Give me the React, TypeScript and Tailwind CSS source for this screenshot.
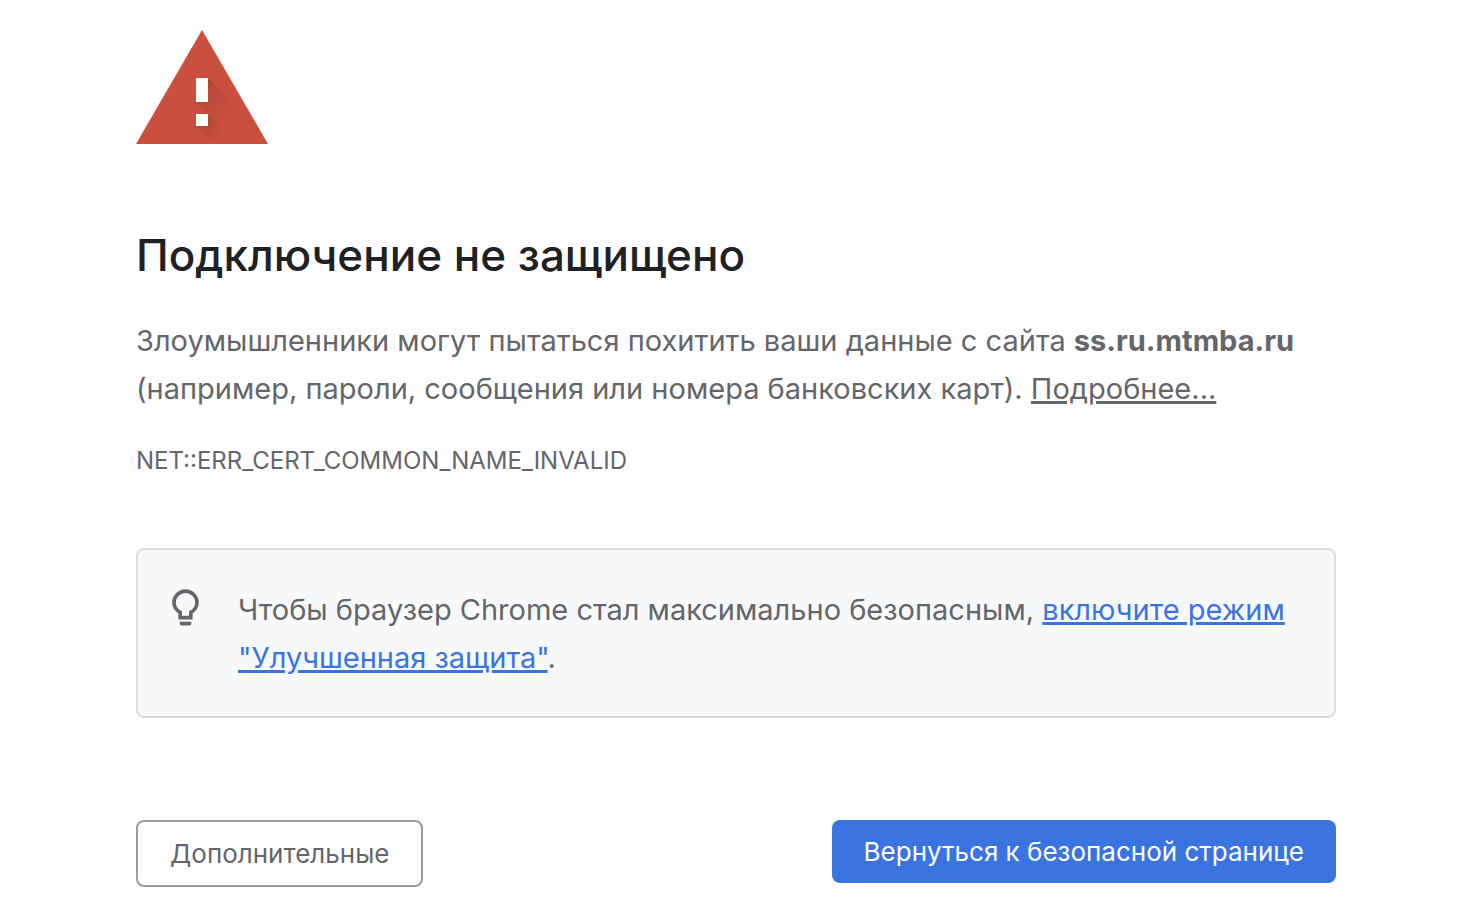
function WarningIcon() {
  return (
    <svg
      className="h-[114px] w-[132px]"
      viewBox="0 0 132 114"
      role="img"
      aria-label="Предупреждение"
    >
      <defs>
        <linearGradient
          id="mark-shadow"
          gradientUnits="userSpaceOnUse"
          x1="66"
          y1="54"
          x2="96"
          y2="84"
        >
          <stop offset="0" stopColor="#7d2d22" stopOpacity="0.28" />
          <stop offset="1" stopColor="#7d2d22" stopOpacity="0" />
        </linearGradient>
        <linearGradient
          id="dot-shadow"
          gradientUnits="userSpaceOnUse"
          x1="66"
          y1="90"
          x2="84"
          y2="108"
        >
          <stop offset="0" stopColor="#7d2d22" stopOpacity="0.28" />
          <stop offset="1" stopColor="#7d2d22" stopOpacity="0" />
        </linearGradient>
      </defs>
      <path d="M66 0 132 114H0z" fill="#ca4f3f" />
      <path d="M72 48 102 78 132 114H102L60 72z" fill="url(#mark-shadow)" />
      <path d="M72 84 102 114H78L60 96z" fill="url(#dot-shadow)" />
      <path d="M60 48h12v24H60zM60 84h12v12H60z" fill="#fff" />
    </svg>
  );
}

function BulbIcon() {
  return (
    <svg
      className="size-12 shrink-0"
      viewBox="0 0 48 48"
      fill="none"
      stroke="#646669"
      strokeWidth="3.6"
      aria-hidden="true"
    >
      <path d="M18.2 31.600v-5.200c-3.700-2-6.200-5.500-6.200-9.800a11.500 11.500 0 0 1 23 0c0 4.300-2.500 7.800-6.200 9.800v5.200z" />
      <path
        d="M17.700 35.800h11.600v1.600a2 2 0 0 1-2 2h-7.600a2 2 0 0 1-2-2z"
        fill="#646669"
        stroke="none"
      />
    </svg>
  );
}

export default function App() {
  return (
    <main className="bg-white pt-[30px] pr-[132px] pb-[29px] pl-[136px] font-['Inter',sans-serif] text-[29px] leading-[48px] text-[#646669]">
      <WarningIcon />

      <h1 className="mt-[82px] text-[44px] leading-[58px] font-medium text-[#202124]">
        Подключение не защищено
      </h1>

      <p className="mt-[33px]">
        Злоумышленники могут пытаться похитить ваши данные с сайта{" "}
        <strong className="font-bold">ss.ru.mtmba.ru</strong> (например,
        пароли, сообщения или номера банковских карт).{" "}
        <a href="#" className="underline decoration-3">
          Подробнее...
        </a>
      </p>

      <p className="mt-6 text-2xl leading-[48px]">
        NET::ERR_CERT_COMMON_NAME_INVALID
      </p>

      <section className="mt-[63px] flex gap-7 rounded-lg border-2 border-[#dadce0] bg-[#f8f9fb] px-6 pt-9 pb-[34px]">
        <BulbIcon />
        <p>
          Чтобы браузер Chrome стал максимально безопасным,{" "}
          <a href="#" className="text-[#3974e0] underline decoration-3">
            включите режим "Улучшенная защита"
          </a>
          .
        </p>
      </section>

      <div className="mt-[102px] flex items-start justify-between text-[26px] leading-[31px]">
        <button
          type="button"
          className="rounded-lg border-2 border-[#9a9b9d] px-8 py-4"
        >
          Дополнительные
        </button>
        <button
          type="button"
          className="rounded-lg bg-[#3974e0] px-8 py-4 text-white"
        >
          Вернуться к безопасной странице
        </button>
      </div>
    </main>
  );
}
